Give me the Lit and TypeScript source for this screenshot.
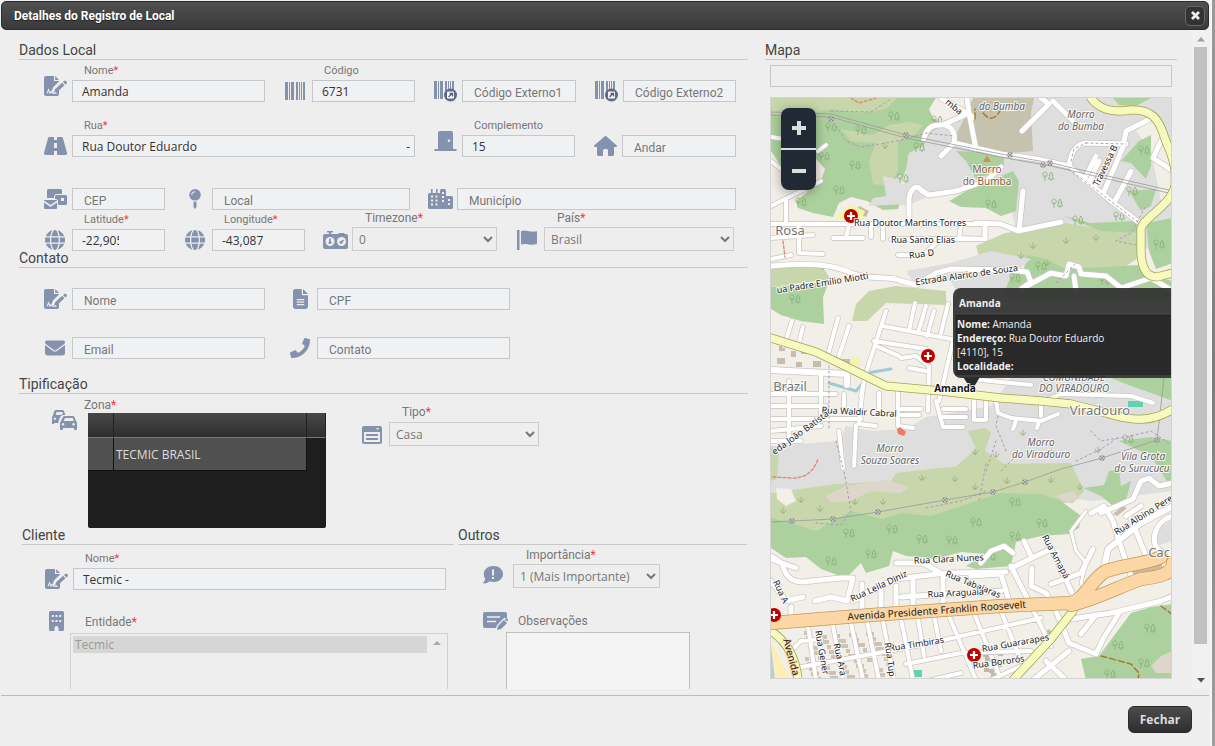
import { LitElement, html, svg, css, nothing } from "lit";
import { customElement, property } from "lit/decorators.js";

/* ---------- icons ---------- */

const BARS = svg`<path d="M0 0h3v18H0zM4 0h1v18H4zM6 0h3v18H6zM11 0h2v18h-2zM14 0h1v18h-1zM16 0h1v18h-1zM18 0h2v18h-2z"/>`;
const BARS_EXT = svg`<g transform="translate(1 0)">${BARS}</g>
  <circle cx="17.500" cy="14" r="6.500" fill="#606a88"/><rect x="14" y="10.500" width="7" height="7" rx="1" fill="#fff"/>
  <path d="M15.500 16l3-3M16.500 12.500h3v3" fill="none" stroke="#505a78" stroke-width="1.300"/>`;

const ICONS: Record<string, { w: number; h: number; vb?: string; body: unknown }> = {
  sign: { w: 23, h: 20, body: svg`
    <path d="M2 0h8v5h5v13a2 2 0 0 1-2 2H2a2 2 0 0 1-2-2V2a2 2 0 0 1 2-2zM11.200 0L15 3.900h-3.800z"/>
    <path d="M9.500 16.500L11 12.500 19 4.800" fill="none" stroke="#eee" stroke-width="4.500"/>
    <path d="M3 17.400l1.600-3.600 1.300 3.400 1.400-1.700 1.200 1.700h4.200" fill="none" stroke="#eee" stroke-width="1.100"/>
    <path d="M10.200 16.600l.9-3.300 7-6.500 2.300 2.400-7 6.500zM19 6l1.200-1.100a1.200 1.200 0 0 1 1.700 0l.7.8a1.200 1.200 0 0 1 0 1.700l-1.200 1.100z"/>` },
  barcode: { w: 20, h: 18, body: BARS },
  barcodeExt: { w: 25, h: 21, body: BARS_EXT },
  road: { w: 23, h: 18, body: svg`<path fill-rule="evenodd" d="M5.500 0H10v3h3V0h4.500a1.500 1.500 0 0 1 1.400 1l4 14.500a2 2 0 0 1-1.900 2.500H13v-4h-3v4H2a2 2 0 0 1-1.900-2.500L4.100 1a1.500 1.500 0 0 1 1.400-1zM10 6v5h3V6z"/>` },
  door: { w: 23, h: 20, body: svg`<path fill-rule="evenodd" d="M4 2a2 2 0 0 1 2-2h11a2 2 0 0 1 2 2v16h3.500v2H.500v-2H4zM15 8.500a1.300 1.300 0 1 0 0 2.600 1.300 1.300 0 0 0 0-2.600z"/>` },
  house: { w: 23, h: 20, body: svg`<path d="M10.500.4a1.500 1.500 0 0 1 2 0L22.600 9.300c.8.800.4 1.700-.6 1.700h-2v7.500a1.500 1.500 0 0 1-1.500 1.500H14v-5.500a1.500 1.500 0 0 0-1.500-1.500h-2A1.500 1.500 0 0 0 9 14.500V20H4.500A1.500 1.500 0 0 1 3 18.500V11H1c-1 0-1.400-.9-.6-1.700z"/>` },
  mails: { w: 23, h: 20, body: svg`<path d="M3 1.500A1.500 1.500 0 0 1 4.500 0h12A1.500 1.500 0 0 1 18 1.500V5h-5a3 3 0 0 0-3 3v1H3z"/>
    <path fill-rule="evenodd" d="M12.500 6h9A1.500 1.500 0 0 1 23 7.500v7a1.500 1.500 0 0 1-1.500 1.500H14v-4.500A2.500 2.500 0 0 0 11.500 10H11V7.500A1.500 1.500 0 0 1 12.500 6zM17 9v3h3V9z"/>
    <path d="M0 11.500L6.500 16l6.500-4.500V11H0zM0 13.500V19a1 1 0 0 0 1 1h11a1 1 0 0 0 1-1v-5.500L6.500 18z"/>` },
  pin: { w: 12, h: 20, body: svg`<path fill-rule="evenodd" d="M6 0a5.800 5.800 0 1 0 0 11.600A5.800 5.800 0 0 0 6 0zM6 2.200v1A2.700 2.700 0 0 0 3.300 6h-1A3.700 3.700 0 0 1 6 2.200z"/><path d="M4.500 12.500q1.500.3 3 0V18L6 20l-1.500-2z"/>` },
  city: { w: 25, h: 20, body: svg`<path fill-rule="evenodd" d="M3 0h1.600v4H8V0h1.600v4H12V1.500A1.500 1.500 0 0 1 13.500 0h3A1.500 1.500 0 0 1 18 1.500V7h5.500A1.500 1.500 0 0 1 25 8.500v10a1.500 1.500 0 0 1-1.500 1.500h-22A1.500 1.500 0 0 1 0 18.500V5.500A1.500 1.500 0 0 1 1.500 4H3zM3 6.500v2h2v-2zM7.500 6.500v2h2v-2zM3 10.500v2h2v-2zM7.500 10.500v2h2v-2zM3 14.500v2h2v-2zM7.500 14.500v2h2v-2zM14 3v2h2V3zM14 7v2h2V7zM14 11v2h2v-2zM20 10v2h2v-2zM20 14v2h2v-2z"/>` },
  globe: { w: 20, h: 20, vb: "0 0 512 512", body: svg`<path d="M352 256c0 22.200-1.200 43.600-3.300 64H163.300c-2.200-20.400-3.300-41.800-3.300-64s1.200-43.600 3.300-64H348.700c2.200 20.400 3.300 41.800 3.300 64zm28.800-64H503.900c5.300 20.500 8.100 41.900 8.100 64s-2.800 43.500-8.100 64H380.800c2.100-20.600 3.200-42 3.200-64s-1.100-43.400-3.200-64zm112.600-32H376.700c-10-63.900-29.800-117.400-55.300-151.600c78.300 20.700 142 77.500 171.900 151.600zm-149.100 0H167.700c6.100-36.400 15.500-68.600 27-94.700c10.500-23.600 22.200-40.700 33.500-51.500C239.400 3.200 248.700 0 256 0s16.600 3.200 27.800 13.800c11.300 10.800 23 27.900 33.500 51.500c11.600 26 20.900 58.200 27 94.700zm-209 0H18.600C48.600 85.900 112.200 29.100 190.600 8.400C165.100 42.600 145.300 96.100 135.300 160zM8.100 192H131.200c-2.100 20.600-3.200 42-3.200 64s1.100 43.400 3.200 64H8.100C2.800 299.500 0 278.100 0 256s2.800-43.500 8.100-64zM194.700 446.600c-11.600-26-20.900-58.200-27-94.600H344.300c-6.100 36.400-15.500 68.600-27 94.600c-10.500 23.600-22.200 40.700-33.500 51.500C272.600 508.800 263.300 512 256 512s-16.600-3.200-27.800-13.800c-11.300-10.800-23-27.900-33.500-51.500zM135.300 352c10 63.900 29.800 117.400 55.300 151.600C112.200 482.900 48.600 426.100 18.600 352H135.300zm358.100 0c-30 74.100-93.600 130.900-171.900 151.600c25.500-34.200 45.200-87.700 55.300-151.600H493.400z"/>` },
  timers: { w: 25, h: 18, body: svg`<path fill-rule="evenodd" d="M4 0h6v1.500H8V3h7l1-1h5l1 1h1a2 2 0 0 1 2 2v11a2 2 0 0 1-2 2H2a2 2 0 0 1-2-2V5a2 2 0 0 1 2-2h4V1.500H4z"/>
    <circle cx="7" cy="10.500" r="4.500" fill="#eee"/><circle cx="18.500" cy="10.500" r="4.500" fill="#eee"/><path d="M7 7.500v4M18 11.500l2.500-2.500" stroke="#8492ae" stroke-width="1.600"/><circle cx="7" cy="11.500" r="1.500"/><circle cx="18" cy="11.300" r="1.500"/>` },
  flag: { w: 21, h: 20, body: svg`<path d="M0 0h2.500v20H0zM4 1.200c5-2 8 1.600 16 0V13.700c-7 2.600-10-1.200-16 .8z"/>` },
  file: { w: 15, h: 20, vb: "0 0 384 512", body: svg`<path fill-rule="evenodd" d="M64 0C28.700 0 0 28.700 0 64V448c0 35.300 28.700 64 64 64H320c35.300 0 64-28.700 64-64V160H256c-17.700 0-32-14.300-32-32V0H64zM256 0V128H384L256 0zM96 256V288H288V256zM96 320V352H288V320zM96 384V416H288V384z"/>` },
  mail: { w: 20, h: 20, vb: "0 0 512 512", body: svg`<path d="M48 64C21.500 64 0 85.500 0 112c0 15.100 7.100 29.300 19.200 38.400L236.800 313.600c11.400 8.500 27 8.500 38.400 0L492.800 150.400c12.100-9.100 19.200-23.300 19.200-38.400c0-26.500-21.500-48-48-48H48zM0 176V384c0 35.300 28.700 64 64 64H448c35.300 0 64-28.700 64-64V176L294.400 339.200c-22.800 17.100-54 17.100-76.800 0L0 176z"/>` },
  phone: { w: 20, h: 20, vb: "0 0 512 512", body: svg`<path d="M493.400 24.600l-104-24c-11.300-2.600-22.900 3.300-27.500 13.900l-48 112c-4.200 9.800-1.400 21.300 6.900 28l60.600 49.600c-36 76.700-98.900 140.500-177.200 177.200l-49.600-60.600c-6.800-8.300-18.200-11.100-28-6.900l-112 48C3.900 366.500-2 378.100.6 389.400l24 104C27.100 504.200 36.700 512 48 512c256.100 0 464-207.500 464-464 0-11.200-7.700-20.900-18.600-23.400z"/>` },
  cars: { w: 25, h: 20, body: svg`<path fill-rule="evenodd" d="M3.800 0h6.400q1.300 0 1.800 1.200L13.300 5H11q-1.800 0-2.500 1.500L7.300 9.300Q6.500 10 6.500 11.500V13H2v1H0V8q0-2 1-2.500L2 1.500Q2.500 0 3.800 0zM4.600 2L3.600 5h5L11 3.800 10.300 2zM2.800 7.500a1.200 1.200 0 1 0 .1 0z"/>
    <path fill-rule="evenodd" d="M12.800 6h8q1.300 0 1.800 1.200L24 11q1 .8 1 2.500V19a1 1 0 0 1-1 1h-1a1 1 0 0 1-1-1v-1H11v1a1 1 0 0 1-1 1H9a1 1 0 0 1-1-1v-5.500Q8 12 9 11l1.800-3.800Q11.400 6 12.800 6zM13 8l-1.300 3h10.200l-1-3zM11 13a1.300 1.300 0 1 0 .1 0zM21.500 13a1.300 1.300 0 1 0 .1 0z"/>` },
  list: { w: 20, h: 18, body: svg`<path fill-rule="evenodd" d="M2 0h16a2 2 0 0 1 2 2v14a2 2 0 0 1-2 2H2a2 2 0 0 1-2-2V2a2 2 0 0 1 2-2zM2 6v10h16V6zM14 2l1.500 2L17 2z"/><path d="M4 8h12v2H4zM4 12h12v2H4z"/>` },
  alert: { w: 20, h: 18, body: svg`<path fill-rule="evenodd" d="M10.500 0C16 0 20 3.500 20 8s-4 8-9.500 8a11 11 0 0 1-4-.7C5 16.800 3 17.500.6 17.500c-.6 0-.8-.6-.3-1 1-1 1.700-2.300 2-3.600A7 7 0 0 1 .8 8C.8 3.500 5 0 10.500 0zM9 3.500v6h2v-6zM9 11v2h2v-2z"/>` },
  note: { w: 25, h: 18, body: svg`<path d="M2 0h20a2 2 0 0 1 2 2v4l-2 .5-9 9.500H2a2 2 0 0 1-2-2V2a2 2 0 0 1 2-2z"/><path d="M4 5h13M4 9.500h9" stroke="#eee" stroke-width="1.300"/><path d="M13.500 18.500l1-5L22 6" fill="none" stroke="#eee" stroke-width="1.500"/><path d="M14 18l1-4 6-6 3 3-6 6zM21.800 7.300l.8-.8q.7-.5 1.300 0l.8.800q.6.700 0 1.400l-.8.800z"/>` },
  building: { w: 15, h: 20, body: svg`<path fill-rule="evenodd" d="M1.500 0h12A1.500 1.500 0 0 1 15 1.500v17a1.500 1.500 0 0 1-1.500 1.500H9.500v-3a2 2 0 0 0-4 0v3h-4A1.500 1.500 0 0 1 0 18.500v-17A1.500 1.500 0 0 1 1.500 0zM2.800 4v2h2V4zM6.500 4v2h2V4zM10.200 4v2h2V4zM2.800 9v2h2V9zM6.500 9v2h2V9zM10.200 9v2h2V9z"/>` },
};

const icon = (name: string) => {
  const i = ICONS[name];
  return html`<svg class="icon" aria-hidden="true" width=${i.w} height=${i.h} viewBox=${i.vb ?? `0 0 ${i.w} ${i.h}`}>${i.body}</svg>`;
};

/* ---------- form fields ---------- */

interface Field {
  id: string;
  icon: string;
  label?: string;
  req?: boolean;
  value?: string;
  hint?: string;
  options?: string[];
  tail?: string;
  narrow?: boolean;
  raised?: boolean;
}

const control = (f: Field) => {
  if (f.options) return html`<select id=${f.id}>${f.options.map((o) => html`<option>${o}</option>`)}</select>`;
  if (f.tail) return html`<span class="box"><input id=${f.id} type="text" .value=${f.value ?? ""} /><span>${f.tail}</span></span>`;
  return html`<input id=${f.id} type="text" class=${f.narrow ? "narrow" : ""} .value=${f.value ?? ""}
    placeholder=${f.hint ?? nothing} aria-label=${f.label ? nothing : f.hint ?? nothing} />`;
};

const field = (f: Field) => html`
  <div class="field">
    <span class=${f.raised ? "mark raised" : "mark"}>${icon(f.icon)}</span>
    <div class="entry">
      ${f.label
        ? html`<label for=${f.id} class=${f.options ? "big" : ""}>${f.label}${f.req ? html`<b>*</b>` : nothing}</label>`
        : nothing}
      ${control(f)}
    </div>
  </div>`;

/* ---------- map ---------- */

const AREAS: [string, string][] = [
  ["#dedede", "M905 150L925 128 945 122 955 97H1172V255L1120 240 1060 225 1020 240 1005 215 1012 188 985 180 940 190 908 204 868 205 870 197 905 190z"],
  ["#f2efe9", "M925 97H972L964 118 950 122 934 118zM1010 205L1016 235 1000 245 975 232 980 200zM1135 130L1150 118 1172 150V190L1160 200 1150 150z"],
  ["#add19e", "M770 97H935L928 108 932 117 944 123 930 131 922 145 908 152 905 168 899 188 902 190 897 208 882 209 866 200 850 196 838 202 832 216 812 212 797 207 795 200 820 180 824 168 815 158 800 160 780 165 770 150z"],
  ["#c8d7ab", "M770 97H896L885 108 860 112 830 108 790 118 770 112zM840 128L860 132 872 134 888 124 908 121 922 124 915 133 897 140 897 170 888 185 872 183 868 160 875 142 850 140z"],
  ["#dedede", "M868 205L872 197 885 195 882 175 895 178 900 172 902 185 910 165 906 155 920 150 930 158 940 155 938 172 915 178 905 203z"],
  ["#c5c3ae", "M972 97H1033L1030 112 1032 150 1010 152 980 148 952 140 962 120z"],
  ["#add19e", "M940 205L965 190 1012 170 1018 180 1015 210 1000 215 985 207 960 206 948 200zM1120 160L1138 140 1150 134 1150 165 1145 178 1130 162zM1128 190L1155 188 1150 205 1140 210zM955 150L1003 152 1003 168 975 178 965 160zM1112 97H1150L1135 105 1118 104z"],
  ["#c8d7ab", "M975 245L1004 232 1040 228 1064 222 1100 228 1138 232 1140 255 1110 275 1065 272 1020 262 980 262z"],
  ["#add19e", "M1062 215L1090 222 1135 220 1140 232 1100 230zM1145 222L1172 217V262L1155 268 1148 250zM1026 254L1045 258 1065 268 1138 264 1150 275 1172 280V300H1010L980 280 1000 265 1022 272z"],
  ["#dedede", "M905 270L950 262 990 250 1030 258 1010 275 1000 300 960 300 950 280 915 285z"],
  ["#add19e", "M770 286L828 281 822 296 823 323 800 320 780 314 770 308z"],
  ["#c8d7ab", "M770 266L820 264 830 278 800 282 770 286zM851 320L855 303 868 290 895 285 945 290 945 304 915 303 885 302 866 320z"],
  ["#dedede", "M770 445L838 440 845 425 870 430 905 428 925 416 950 412 990 405 1010 377H1172V490L1090 500 1000 485 880 480 770 492z"],
  ["#add19e", "M1110 377H1172V400L1150 392 1130 385zM1118 440L1150 436 1172 440V490L1150 455z"],
  ["#c8d7ab", "M967 430L985 427 990 432 984 450 1010 468 985 475 950 470 975 448zM770 445L778 452 776 478 770 480z"],
  ["#c8d7ab", "M770 492L835 483 890 480 895 472 930 468 985 463 1070 462 1083 490 1072 502 1000 500 900 525 815 532 770 520z"],
  ["#dfd6cb", "M825 495L845 485 885 479 908 486 900 492 870 490 850 500 830 501zM1055 495L1072 490 1078 498 1065 502z"],
  ["#f2efe9", "M775 487L790 488 795 500 785 505 776 498z"],
  ["#add19e", "M770 517L790 522 815 530 850 510 880 518 900 512 930 515 960 505 1000 492 1040 493 1060 500 1080 515 1078 527 1068 533 1040 535 1015 541 1010 565 975 568 965 565 985 553 960 551 935 558 905 555 892 550 888 565 865 572 860 562 845 577 820 568 805 556 785 557 770 547z"],
  ["#add19e", "M1082 487L1103 484 1108 470 1118 468 1120 485 1130 480 1125 500 1112 505 1100 495zM1172 603L1150 606 1130 612 1115 632 1098 655 1080 658 1085 679H1172z"],
  ["#dfd6cb", "M1150 665L1160 655 1172 650V672L1155 672z"],
  ["#dedede", "M1155 530L1172 518V540L1155 545z"],
  ["#c9bba9", "M778 345h6v5h-6zM790 350h5v6h-5zM800 348h7v5h-7zM776 357h8v6h-8zM795 361h6v5h-6zM812 360h8v6h-8zM840 358h9v7h-9zM858 205l10 5-3 6-10-5zM1130 568l15-6 15-1 2 8-30 6zM1047 628l8 5-4 7-7-6zM1112 513l10-8 4 2-10 8z"],
  ["#f5f5a5", "M850 356h9v9h-9zM835 215l15-11 14 6-4 9-23-1z"],
  ["#5fd3b2", "M1127 400h15v6h-15zM912 669h9v7h-9z"],
  ["#fdeeb6", "M770 640L790 679H770z"],
  ["#aad3df", "M770 645L774 679H770z"],
];

const STREETS: [number, string][] = [
  [5, "M940 97L972 116M966 97L968 112 975 148M923 138C925 128 930 124 938 124 950 122 955 132 953 142L940 155M944 123L968 112M1021 130L1048 103 1040 97M1052 100L1072 120"],
  [5, "M953 142L1000 153 1035 158 1068 165 1110 200 1140 223M1083 179L1095 155M1090 178L1098 160M1093 186L1113 148M1102 193L1122 146 1125 130 1145 120 1155 115M1113 202L1130 170M1172 170L1152 157 1160 140M1068 165C1070 150 1075 143 1085 142L1125 143"],
  [5, "M908 222V200C908 188 916 182 921 190L928 194 955 190 985 180 1000 166M975 222L1000 223 1017 230 1060 221M1018 230L1022 190M984 222V236"],
  [4, "M770 223H988M770 205L820 180M785 198V222M770 136L782 138M817 150L825 144M770 160L782 170M848 224L845 237M832 237H862M870 224V236M882 224V238M890 238H985M798 224V252L822 253M770 237L812 234M897 254H922L940 238M770 258L790 254M960 225L958 237 985 238"],
  [5, "M770 265C800 262 830 262 850 272 870 280 890 274 900 280L915 284 935 272 950 268 1010 269 1026 271 1030 281 1020 288M1020 288L1050 272 1065 275 1068 263 1078 266 1080 273 1105 275 1120 287 1150 277 1172 290M1073 275L1075 290"],
  [4, "M837 317L828 350M848 325L838 355M791 320L783 345M802 326L797 345M885 310L865 372 860 395M882 325L950 338 975 345M873 340L925 348M875 345L898 355M900 357L915 355 928 365 927 410M908 367L925 370M952 340L938 400M914 302L908 330M925 305L917 332M933 310L926 335M947 303L940 332"],
  [6, "M770 369L846 373 846 384"],
  [4, "M770 393H835M770 405H825M770 418H860M770 430L820 425M770 440L800 440M788 380V440M820 372V420M843 393V405M862 385L858 423 875 425M878 392V410M897 390V425L912 427M935 400L942 426 962 426M900 408H920M900 414H918M942 408H965M942 416H965M973 400V419H985V400M855 424L853 465M838 430L842 467"],
  [4, "M995 400L997 412 1010 417 1040 420 1057 413M1015 420L1012 428M1038 420L1036 427M1040 405V415M1043 400L1060 393 1130 395 1152 402M970 378L1030 384"],
  [5, "M770 555L781 562C785 580 795 583 810 580L840 577 852 577 846 600 830 596 814 600M852 600L870 590 895 578 945 572 1005 571M895 562H922L945 575M942 574V605M912 577V605M895 585V608M900 596L1000 590M880 587V608M861 583V612M980 562L990 550 1003 545 1012 552M770 580L785 600 802 596M790 606V622M770 558L795 567M970 575L1000 573 1008 600"],
  [4, "M807 625L815 679M832 625L842 679M850 622L862 679M866 620L878 679M882 620L893 679M900 618L912 679M917 617L923 655M933 615L940 650M948 615L975 679M973 612L1000 679M1000 610L1020 660M1030 605L1050 645M795 667L920 644 1040 617M905 663L960 652 1030 650M930 679L960 672M790 650L800 640 820 638M990 679L1020 665"],
  [5, "M1010 567L1050 548M1010 565L1030 605M1045 537L1075 600M1023 540L1030 555M1031 567L1030 585 1045 592 1055 610 1068 642 1095 653 1102 638 1118 612M1050 583L1080 572 1092 548M1070 618L1110 612 1160 600 1172 595M1080 633L1095 614M1032 679L1068 650M1045 660L1065 679"],
  [5, "M1090 512L1103 505 1112 520 1118 540 1130 575M1100 512L1132 498 1140 480 1148 477 1158 485 1172 482M1130 518L1145 555M1125 515L1140 505M1172 515C1152 520 1148 545 1160 550"],
  [6, "M1101 575L1107 548 1140 522 1172 505"],
  [3, "M1085 510L1070 530 1075 550 1085 562 1080 582 1088 598"],
];

const YELLOW = "M770 337L815 351 850 368 885 385 940 390 1000 397 1040 400 1070 403 1105 412C1130 420 1150 422 1172 408M1090 97C1098 108 1110 112 1130 109 1150 108 1158 118 1163 135 1168 150 1176 160 1174 185 1170 205 1140 218 1140 228V248C1140 268 1146 276 1156 276L1172 272M1072 610L1050 638 1012 679M770 630C785 640 795 655 797 679";
const ORANGE = "M770 622L870 614 1000 605 1070 602C1085 598 1090 578 1105 570 1130 562 1150 562 1160 556M1070 604C1095 598 1120 585 1140 578 1160 576 1172 572 1172 562";
const PATHS = "M830 110L870 111 890 98M835 125L845 140 860 146 885 142 905 138 925 132 953 135M1140 245L1115 240 1130 232 1145 205M828 365V430M835 440L842 467M1005 450L995 425 997 415M985 470L995 440M1000 470L1015 455M815 522L840 524 850 510 843 470M925 507L960 500 985 490M985 463L978 500M1055 282L1075 262M1090 430L1100 440 1130 435 1150 430 1172 445M1068 168L1138 222M1075 460L1100 448 1118 436M1085 142L1125 143M1070 160L1073 148 1085 142";
const RAIL = "M770 111L830 113 905 134 1010 155 1050 162 1172 190M770 114L830 116 905 137 1010 158 1050 165 1172 193";
const LINE = "M770 521L791 520 832 518 877 511 944 499 992 491 1024 481 1060 468 1101 457 1156 439 1163 377";
const PYLONS = [[830, 118], [905, 134], [1009, 154], [1049, 162], [1042, 164], [791, 520], [832, 518], [877, 511], [944, 499], [992, 491], [1024, 481], [1101, 457], [1156, 439]];
const TREES = [[830, 127], [893, 116], [860, 130], [823, 156], [854, 165], [918, 147], [936, 120], [902, 178], [838, 190], [800, 202], [990, 204], [1047, 176], [1056, 203], [1077, 220], [1118, 216], [1143, 150], [1131, 191], [1158, 244], [794, 299], [1014, 278], [1040, 266], [1104, 280], [1127, 439], [848, 533], [891, 529], [975, 522], [830, 561], [870, 554], [921, 539], [951, 540], [1014, 502], [1041, 523], [1014, 536], [1117, 645], [1149, 628], [1143, 663], [989, 556], [1109, 674]];
const GRASS = [[884, 146], [1032, 246], [1065, 241], [1095, 238], [1020, 256], [1046, 263], [822, 267], [782, 511], [800, 500], [854, 502], [819, 509], [882, 502], [921, 478], [954, 479], [974, 487], [1006, 481], [1050, 480], [1079, 487], [974, 452], [995, 455], [1022, 433], [1050, 452], [1097, 450]];
const CROSSES = [[850, 215], [927, 355], [773, 614], [973, 654]];

type Tag = [string, number, number, number?, string?];
const TAGS: Tag[] = [
  ["do Bumba", 1001, 109, 0, "hill"], ["Morro", 1080, 117, 0, "hill"], ["do Bumba", 1080, 129, 0, "hill"],
  ["Morro", 986, 172, 0, "peak"], ["do Bumba", 986, 184, 0, "peak"],
  ["mba", 951, 108, 40], ["Travessa B", 1107, 166, -64],
  ["Rua Doutor Martins Torres", 909, 225], ["Rua Santo Elias", 922, 242], ["Rua D", 921, 256, -8],
  ["Estrada Alarico de Souza", 966, 277, -8], ["ua Padre Emílio Miotti", 822, 285, -9],
  ["Rua Waldir Cabral", 858, 414, 3], ["eda João Batista", 801, 434, -36],
  ["Morro", 889, 451, 0, "hill"], ["Souza Soares", 889, 463, 0, "hill"],
  ["COMUNIDADE", 1073, 380, 0, "hill"], ["DO VIRADOURO", 1073, 391, 0, "hill"],
  ["Morro", 1040, 445, 0, "hill"], ["do Viradouro", 1040, 457, 0, "hill"],
  ["Vila Grota", 1142, 459, 0, "hill"], ["do Surucucu", 1141, 471, 0, "hill"],
  ["Rosa", 789, 234, 0, "town"], ["Brazil", 789, 390, 0, "town"], ["Viradouro", 1099, 414, 0, "town"], ["Cac", 1158, 556, 0, "town"],
  ["Rua Clara Nunes", 948, 561, -3], ["Rua Leila Diniz", 879, 588, -25], ["Rua Tabajaras", 971, 586, 22],
  ["Rua Araguaia", 955, 595, -3], ["Rua Amapá", 1052, 557, 62], ["Rua Albino Perei", 1145, 516, -32],
  ["Avenida Presidente Franklin Roosevelt", 936, 613, -4, "avenue"],
  ["Rua Timbiras", 916, 646, -9], ["Rua Guararapes", 1015, 645, -10], ["Rua Bororós", 998, 664, -8],
  ["Rua Gener", 818, 652, 80], ["Rua Ara", 836, 659, 78], ["Rua Tup", 886, 659, 82], ["Rua A", 777, 592, 64], ["Avenida", 787, 657, 75, "avenue"],
];

@customElement("place-map")
export class PlaceMap extends LitElement {
  static styles = css`
    :host { display: block; position: relative; overflow: hidden; border: 1px solid #d4d4d4; box-sizing: border-box; font-family: "Open Sans", "Noto Sans", sans-serif; }
    svg { display: block; width: 100%; height: auto; }
    text { font: 9px "Noto Sans", sans-serif; fill: #222; text-anchor: middle; paint-order: stroke; stroke: #fff; stroke-opacity: .8; stroke-width: 2px; }
    .hill { font-size: 10px; font-style: italic; fill: #666; }
    .peak { font-size: 10px; fill: #8a5c3c; }
    .town { font-size: 13px; fill: #777; }
    .avenue { font-size: 10px; stroke: #fcd6a4; }
    .self { font: bold 10px "Open Sans", sans-serif; fill: #111; }
    .line { fill: none; stroke-linejoin: round; stroke-linecap: round; }
    .zoom { position: absolute; left: 10px; top: 10px; display: grid; gap: 2px; border-radius: 8px; overflow: hidden; background: #ddd; box-shadow: 0 2px 12px rgba(0, 0, 0, .35); }
    .zoom button { width: 35px; height: 40px; border: 0; padding: 0; display: grid; place-items: center; background: #212836; }
    .zoom svg { width: 14px; height: 14px; }
    .card { position: absolute; left: 182px; top: 190px; right: 0; box-sizing: border-box; height: 90px; padding: 8px 0 0 3px; border-radius: 8px 0 0 8px; background: rgba(48, 48, 48, .93); color: #eee; font-size: 10px; line-height: 14px; }
    .card h3 { margin: 0 0 4px 3px; font-size: 10px; line-height: 15px; }
    .card p { margin: 0 0 0 -1px; padding: 1px 0 0 1px; background: rgba(28, 28, 28, .6); border-top: 1px solid #222; border-left: 1px solid #333; box-sizing: border-box; height: 60px; }
  `;

  render() {
    return html`
      <svg viewBox="770 97 400 580" role="img" aria-label="Mapa">
        <defs>
          <symbol id="tree" viewBox="0 0 12 11" overflow="visible">
            <path d="M3 1a2 2 0 0 1 2 2.500A2 2 0 0 1 3 6 2 2 0 0 1 1 3.500 2 2 0 0 1 3 1zM3 4V10M9 1L7 4.500H8L6.500 8H11.500L10 4.500H11zM9 8V10" fill="none" stroke="#86b078" stroke-width=".8"/>
          </symbol>
        </defs>
        <rect x="770" y="97" width="402" height="582" fill="#f2efe9" />
        ${AREAS.map(([fill, d]) => svg`<path d=${d} fill=${fill} />`)}
        <path class="line" d="M775 384L790 386 800 388M828 382L855 390 862 382 866 372 890 368" stroke="#9fcbd8" stroke-width="3" />
        ${TREES.map(([x, y]) => svg`<use href="#tree" x=${x - 6} y=${y - 6} width="12" height="11" />`)}
        ${GRASS.map(([x, y]) => svg`<path class="line" d="M${x - 3} ${y - 2}l2 3h2l2-3M${x} ${y - 4}v5" stroke="#98aa70" stroke-width=".8" />`)}
        ${this.houses()}
        ${STREETS.map(([w, d]) => svg`<path class="line" d=${d} stroke="#c9c6c1" stroke-width=${w + 1.4} />`)}
        ${STREETS.map(([w, d]) => svg`<path class="line" d=${d} stroke="#fff" stroke-width=${w} />`)}
        <path class="line" d=${PATHS} stroke="#b096b8" stroke-width="1" stroke-dasharray="2 3" />
        <path class="line" d="M772 476L790 477Q810 478 817 458M850 97L858 102 875 97M782 240L784 256" stroke="#e88070" stroke-width="1.300" stroke-dasharray="3 2" />
        <path class="line" d="M974 118V108M982 112Q992 124 1000 108M1100 655L1130 663 1138 672 1137 679M1160 605L1172 614" stroke="#a87828" stroke-width="1.500" stroke-dasharray="6 3" />
        <path class="line" d=${RAIL} stroke="#999" stroke-width=".8" />
        <path class="line" d=${LINE} stroke="#999" stroke-width=".8" />
        <path class="line" d=${YELLOW} stroke="#a3a24e" stroke-width="9" />
        <path class="line" d=${YELLOW} stroke="#f7fabf" stroke-width="7.500" />
        <path class="line" d=${ORANGE} stroke="#c39a55" stroke-width="14" />
        <path class="line" d=${ORANGE} stroke="#fcd6a4" stroke-width="12.500" />
        ${PYLONS.map(([x, y]) => svg`<path d="M${x - 2} ${y - 2}h4v4h-4zl4 4m0-4l-4 4" fill="#eee" stroke="#777" stroke-width=".7" />`)}
        <path d="M986 154l4 7h-8z" fill="#d08f55" />
        <path d="M896 428l3-2 6 5-2 4-6-2z" fill="#f07a60" />
        ${CROSSES.map(([x, y]) => svg`<circle cx=${x} cy=${y} r="7" fill="#bf0000" /><path d="M${x - 4} ${y}h8M${x} ${y - 4}v8" stroke="#fff" stroke-width="2.200" />`)}
        ${TAGS.map(([s, x, y, r, k]) => svg`<text class=${k ?? ""} transform="translate(${x} ${y}) rotate(${r ?? 0})">${s}</text>`)}
        <path d="M962 376h17l-8 13z" fill="#2a2a2a" />
        <text class="self" x="954" y="391">Amanda</text>
      </svg>
      <div class="zoom">
        <button aria-label="Aproximar"><svg viewBox="0 0 14 14"><path d="M7 0v14M0 7h14" stroke="#ddd" stroke-width="4" /></svg></button>
        <button aria-label="Afastar"><svg viewBox="0 0 14 14"><path d="M0 8h14" stroke="#ddd" stroke-width="4" /></svg></button>
      </div>
      <div class="card">
        <h3>Amanda</h3>
        <p><b>Nome:</b> Amanda<br /><b>Endereço:</b> Rua Doutor Eduardo<br />[4110], 15<br /><b>Localidade:</b></p>
      </div>`;
  }

  /* Small building footprints scattered through the southern blocks. */
  private houses() {
    const out = [];
    for (let i = 0; i < 80; i++) {
      const x = 803 + ((i * 37) % 83);
      const y = 630 + ((i * 29) % 47);
      out.push(svg`<rect x=${x} y=${y} width="4" height="4" fill="#cfc2b4" />`);
    }
    for (let i = 0; i < 14; i++) out.push(svg`<rect x=${980 + ((i * 7) % 20)} y=${648 + ((i * 5) % 26)} width="5" height="4" fill="#c6b8a8" />`);
    return out;
  }
}

/* ---------- dialog ---------- */

@customElement("app-root")
export class AppRoot extends LitElement {
  @property() heading = "Detalhes do Registro de Local";

  static styles = css`
    :host { display: block; height: 100vh; box-sizing: border-box; padding-right: 3px; background: linear-gradient(#9a9a9a, #7c7c7c 50%, #a0a0a0); font-family: Roboto, sans-serif; color: #444; }
    .dialog { display: flex; flex-direction: column; height: 100%; box-sizing: border-box; padding: 1px 1px 0 1px; background: #eee; border-right: 2px solid #f6f6f6; }
    header { display: flex; align-items: center; justify-content: space-between; height: 29px; box-sizing: border-box; padding: 0 3px 0 12px; border: 1px solid #2c2c2c; border-radius: 5px; background: linear-gradient(#505050, #424242 60%, #3a3a3a); color: #fff; }
    h1 { margin: 0; font-size: 12px; line-height: 16px; font-weight: 700; text-shadow: 0 1px 1px #222; }
    .close { width: 20px; height: 20px; padding: 0; display: grid; place-items: center; border: 1px solid #666; border-radius: 5px; background: #333; }
    .scroll { flex: 1; min-height: 0; display: flex; overflow: hidden; }
    .content { flex: 1; display: grid; grid-template-columns: 729fr 412fr; gap: 17px; padding: 13px 15px 0 18px; align-items: start; }
    h2 { margin: 0; padding-bottom: 2px; border-bottom: 1px solid #c8c8c8; font-size: 14px; line-height: 14px; font-weight: 400; color: #444; }

    .row { display: grid; padding: 0 12px 0 17px; align-items: end; }
    .r1 { grid-template-columns: 229fr 150fr 161fr 160fr; padding-top: 4px; }
    .r2 { grid-template-columns: 379fr 160fr 161fr; padding-top: 17px; }
    .r3 { grid-template-columns: 129fr 245fr 326fr; padding-top: 31px; }
    .r4 { grid-template-columns: 129fr 140fr 192fr 237fr; padding: 1px 14px 0 17px; }
    .r5 { grid-template-columns: 229fr 245fr; padding: 20px 238px 0 17px; }
    .r6 { grid-template-columns: 229fr 245fr; padding: 27px 238px 18px 17px; }
    .field { display: grid; grid-template-columns: 36px 1fr; align-items: end; }
    .r3 .field:nth-child(2), .r4 .field:nth-child(2), .r4 .field:nth-child(3) { padding-left: 11px; }
    .r1 .field + .field, .r2 .field + .field, .r3 .field:nth-child(3), .r4 .field:nth-child(4) { padding-left: 11px; }
    .r5 .field + .field, .r6 .field + .field { padding-left: 16px; }
    .mark { display: grid; place-items: center; min-height: 22px; padding-left: 2px; }
    .raised { padding-bottom: 5px; }
    .icon { fill: #8492ae; display: block; }
    .entry { display: grid; gap: 2px; min-width: 0; }
    label { padding-left: 12px; font-size: 11px; line-height: 14px; color: #777; }
    label.big { padding-left: 13px; font-size: 12px; }
    label b { font-weight: 400; color: #f33; }
    input, .box { box-sizing: border-box; width: 100%; min-width: 0; height: 22px; padding: 0 9px; border: 1px solid #c6c7c9; border-radius: 0; background: #f0f1f3; color: #333; font: 12px "Open Sans", "Noto Sans", sans-serif; }
    input:placeholder-shown { padding: 2px 0 0 11px; }
    input::placeholder { color: #777; font: 12px Roboto, sans-serif; }
    .box { display: flex; align-items: center; padding: 0 4px 0 0; }
    .box input { border: 0; height: 20px; background: none; }
    .narrow { padding-right: 45px; }
    select { box-sizing: border-box; width: 100%; height: 24px; padding: 0 2px; border: 1px solid #ccc; border-radius: 0; background: #eee; color: #777; font: 12px "Open Sans", "Noto Sans", sans-serif; }

    .typing { display: grid; grid-template-columns: 269fr 27fr 186fr 209fr; padding: 4px 0 0 38px; align-items: start; }
    .zone { display: grid; grid-template-columns: 31px 1fr; }
    .zone .mark { padding: 12px 0 0; place-content: start; margin-left: -5px; }
    .zone label { padding-left: 0; line-height: 15px; display: block; margin-left: -4px; font-size: 12px; }
    .panel { height: 115px; box-sizing: border-box; background: #1e1e1e; border-radius: 2px; }
    table { width: 100%; border-collapse: separate; border-spacing: 0; table-layout: fixed; color: #ddd; font: 12px "Open Sans", "Noto Sans", sans-serif; }
    th { height: 24px; padding: 0; background: linear-gradient(#484848, #2e2e2e); border: 0 solid #222; border-right-width: 1px; border-bottom: 1px solid #777; }
    td { height: 33px; box-sizing: border-box; padding: 0 2px; background: #505050; border-right: 1px solid #111; border-bottom: 1px solid #111; }
    td:last-child { background: none; border: 0; }
    .c1 { width: 25px; }
    .c3 { width: 18px; }
    .kind { padding-top: 7px; grid-column: 3; }
    .kind .entry { gap: 3px; }

    .lower { display: grid; grid-template-columns: 432fr 289fr; gap: 4px; padding: 0 1px 0 3px; align-items: start; }
    .client .field { padding: 7px 8px 0 15px; }
    .other .field { padding: 3px 87px 0 19px; }
    .other .field .mark { padding: 0 4px 2px 0; }
    .pair { display: grid; grid-template-columns: 36px 1fr; align-items: center; padding: 20px 0 0 15px; }
    .pair label { font-size: 12px; padding-left: 12px; padding-top: 2px; }
    .other .pair { padding: 22px 0 0 18px; }
    .other .pair label { padding: 0 0 0 6px; }
    .list { display: flex; align-items: start; margin: 1px 6px 0 48px; padding: 2px; height: 120px; border: 1px solid #d0d0d0; }
    .list select { flex: 1; height: 112px; border: 0; padding: 0; overflow: hidden; opacity: 1; color: #999; background: none; scrollbar-width: none; }
    .list option { padding: 0 2px; line-height: 17px; min-height: 17px; color: #999; background: #d6d6d6; }
    .list svg { margin: 5px 4px 0 6px; }
    textarea { display: block; box-sizing: border-box; width: calc(100% - 105px); height: 120px; margin-left: 48px; border: 1px solid #c0c0c0; background: #f4f4f4; resize: none; }

    .place { padding: 5px 5px 0; display: grid; gap: 10px; }
    .place input { background: #eee; }
    .bar { display: flex; flex-direction: column; align-items: center; width: 17px; background: #f1f1f1; padding: 7px 0 6px; box-sizing: border-box; }
    .bar .thumb { width: 13px; background: #c1c1c1; flex: 1; margin: 5px 0 34px; }
    footer { display: flex; justify-content: flex-end; margin-top: 6px; height: 51px; box-sizing: border-box; padding: 10px 17px 0 0; border-top: 1px solid #bbb; }
    .ok { width: 64px; height: 27px; border: 1px solid #2a2a2a; border-radius: 6px; padding: 0; background: linear-gradient(#4c4c4c, #2e2e2e); color: #ddd; font: 700 12px "Open Sans", "Noto Sans", sans-serif; }
  `;

  render() {
    return html`
      <div class="dialog">
        <header>
          <h1>${this.heading}</h1>
          <button class="close" aria-label="Fechar janela">
            <svg width="9" height="9" viewBox="0 0 9 9"><path d="M1 1l7 7M8 1L1 8" stroke="#eee" stroke-width="2.800" /></svg>
          </button>
        </header>
        <div class="scroll">
          <div class="content">
            <form>
              <h2>Dados Local</h2>
              <div class="row r1">
                ${[
                  { id: "nome", icon: "sign", label: "Nome", req: true, value: "Amanda", raised: true },
                  { id: "codigo", icon: "barcode", label: "Código", value: "6731" },
                  { id: "ext1", icon: "barcodeExt", hint: "Código Externo1" },
                  { id: "ext2", icon: "barcodeExt", hint: "Código Externo2" },
                ].map(field)}
              </div>
              <div class="row r2">
                ${[
                  { id: "rua", icon: "road", label: "Rua", req: true, value: "Rua Doutor Eduardo", tail: "-" },
                  { id: "compl", icon: "door", label: "Complemento", value: "15", raised: true },
                  { id: "andar", icon: "house", hint: "Andar" },
                ].map(field)}
              </div>
              <div class="row r3">
                ${[
                  { id: "cep", icon: "mails", hint: "CEP" },
                  { id: "local", icon: "pin", hint: "Local" },
                  { id: "municipio", icon: "city", hint: "Município" },
                ].map(field)}
              </div>
              <div class="row r4">
                ${[
                  { id: "lat", icon: "globe", label: "Latitude", req: true, value: "-22,905", narrow: true },
                  { id: "lon", icon: "globe", label: "Longitude", req: true, value: "-43,087" },
                  { id: "tz", icon: "timers", label: "Timezone", req: true, options: ["0"] },
                  { id: "pais", icon: "flag", label: "País", req: true, options: ["Brasil"] },
                ].map(field)}
              </div>
              <h2>Contato</h2>
              <div class="row r5">
                ${[{ id: "cnome", icon: "sign", hint: "Nome" }, { id: "cpf", icon: "file", hint: "CPF" }].map(field)}
              </div>
              <div class="row r6">
                ${[{ id: "email", icon: "mail", hint: "Email" }, { id: "contato", icon: "phone", hint: "Contato" }].map(field)}
              </div>
              <h2>Tipificação</h2>
              <div class="typing">
                <div class="zone">
                  <span class="mark">${icon("cars")}</span>
                  <div>
                    <label id="zona">Zona<b>*</b></label>
                    <div class="panel">
                      <table aria-labelledby="zona">
                        <thead><tr><th class="c1"></th><th></th><th class="c3"></th></tr></thead>
                        <tbody><tr><td></td><td>TECMIC BRASIL</td><td></td></tr></tbody>
                      </table>
                    </div>
                  </div>
                </div>
                <div class="kind">${field({ id: "tipo", icon: "list", label: "Tipo", req: true, options: ["Casa"] })}</div>
              </div>
              <div class="lower">
                <section class="client">
                  <h2>Cliente</h2>
                  ${field({ id: "clnome", icon: "sign", label: "Nome", req: true, value: "Tecmic -" })}
                  <div class="pair"><span class="mark">${icon("building")}</span><label for="ent">Entidade<b>*</b></label></div>
                  <div class="list">
                    <select id="ent" size="6" disabled><option>Tecmic</option></select>
                    <svg width="8" height="5" viewBox="0 0 8 5"><path d="M0 4l4-4 4 4z" fill="#aaa" /></svg>
                  </div>
                </section>
                <section class="other">
                  <h2>Outros</h2>
                  ${field({ id: "imp", icon: "alert", label: "Importância", req: true, options: ["1 (Mais Importante)"] })}
                  <div class="pair"><span class="mark">${icon("note")}</span><label for="obs">Observações</label></div>
                  <textarea id="obs"></textarea>
                </section>
              </div>
            </form>
            <section>
              <h2>Mapa</h2>
              <div class="place">
                <input type="text" aria-label="Pesquisar no mapa" />
                <place-map></place-map>
              </div>
            </section>
          </div>
          <div class="bar" aria-hidden="true">
            <svg width="8" height="5" viewBox="0 0 8 5"><path d="M0 4.500L4 0l4 4.500z" fill="#a0a0a0" /></svg>
            <div class="thumb"></div>
            <svg width="8" height="5" viewBox="0 0 8 5"><path d="M0 0l4 4.500L8 0z" fill="#505050" /></svg>
          </div>
        </div>
        <footer><button class="ok">Fechar</button></footer>
      </div>`;
  }
}
